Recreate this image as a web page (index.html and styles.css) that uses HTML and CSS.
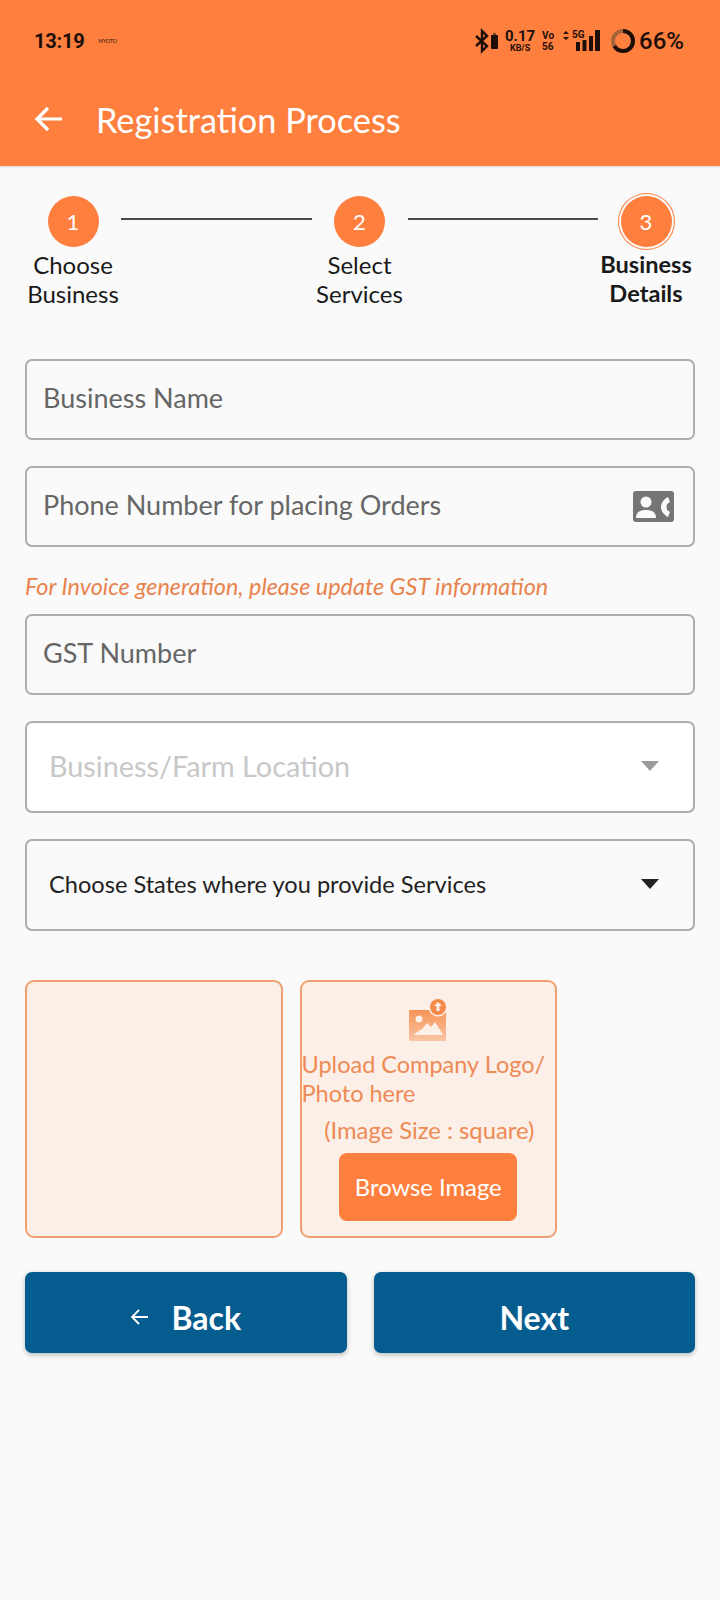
FILE: index.html
```html
<!DOCTYPE html>
<html lang="en">
<head>
  <meta charset="UTF-8">
  <title>Registration Process</title>
  <link rel="stylesheet" href="styles.css">
</head>
<body>
  <!-- Header -->
  <header class="app-header">
    <div class="status-bar">
      <span class="status-time">13:19</span>
      <span class="status-carrier">MYOTO</span>
      <div class="status-icons">
        <svg class="icon-bt" width="24" height="26" viewBox="0 0 24 26">
          <path d="M1 8l11 10-5 5V3l5 5L1 18" fill="none" stroke="#1d0f08" stroke-width="2.4"/>
          <rect x="16" y="7" width="7" height="14" rx="1" fill="#1d0f08"/>
          <rect x="18" y="5" width="3" height="2" fill="#7a4a2a"/>
        </svg>
        <div class="net-speed"><b>0.17</b><small>KB/S</small></div>
        <div class="volte"><span>Vo</span><span>56</span></div>
        <svg class="icon-signal" width="38" height="24" viewBox="0 0 38 24">
          <path d="M0 5l3-3 3 3zM0 8l3 3 3-3z" fill="#1d0f08"/>
          <text x="9" y="9" class="signal-label">5G</text>
          <rect x="13" y="13" width="4" height="9" fill="#1d0f08"/>
          <rect x="19.500" y="11" width="4" height="11" fill="#1d0f08"/>
          <rect x="26" y="7" width="4" height="15" fill="#1d0f08"/>
          <rect x="32" y="1" width="5" height="21" fill="#1d0f08"/>
        </svg>
        <svg class="icon-battery" width="26" height="26" viewBox="0 0 26 26">
          <circle cx="13" cy="13" r="10" fill="none" stroke="#a5643a" stroke-width="4"/>
          <circle cx="13" cy="13" r="10" fill="none" stroke="#1d0f08" stroke-width="4" stroke-dasharray="41.5 62.8" transform="rotate(-90 13 13)"/>
        </svg>
        <span class="status-battery">66%</span>
      </div>
    </div>
    <div class="title-bar">
      <svg class="back-arrow" width="30" height="28" viewBox="0 0 30 28">
        <path d="M28 14H4M14 3L3 14l11 11" fill="none" stroke="#fff" stroke-width="3.2"/>
      </svg>
      <h1>Registration Process</h1>
    </div>
  </header>

  <main>
    <!-- Steps -->
    <div class="stepper">
      <div class="step">
        <div class="step-circle">1</div>
        <div class="step-label">Choose<br>Business</div>
      </div>
      <div class="step-line"></div>
      <div class="step">
        <div class="step-circle">2</div>
        <div class="step-label">Select<br>Services</div>
      </div>
      <div class="step-line"></div>
      <div class="step active">
        <div class="step-circle">3</div>
        <div class="step-label">Business<br>Details</div>
      </div>
    </div>

    <!-- Form -->
    <form class="reg-form">
      <div class="field">Business Name</div>
      <div class="field">
        Phone Number for placing Orders
        <svg class="contact-icon" width="41" height="31" viewBox="0 0 41 31">
          <rect width="41" height="31" rx="3" fill="#757575"/>
          <circle cx="13" cy="11" r="5.500" fill="#fafafa"/>
          <path d="M3 27c0-6 4-8 10-8s10 2 10 8z" fill="#fafafa"/>
          <path d="M35 6l2 5-3 2c-.5 2-.5 4 0 6l3 2-2 5c-4-2-7-6-7-10s3-8 7-10z" fill="#fafafa"/>
        </svg>
      </div>
      <p class="gst-note">For Invoice generation, please update GST information</p>
      <div class="field">GST Number</div>
      <div class="field select-field location">
        <span>Business/Farm Location</span>
        <span class="caret"></span>
      </div>
      <div class="field select-field states">
        <span>Choose States where you provide Services</span>
        <span class="caret"></span>
      </div>

      <!-- Upload -->
      <div class="upload-row">
        <div class="upload-tile"></div>
        <div class="upload-tile upload-box">
          <svg class="upload-icon" width="40" height="44" viewBox="0 0 40 44">
            <defs>
              <linearGradient id="photoFade" x1="0" y1="0" x2="0" y2="1">
                <stop offset="0" stop-color="#f79458"/>
                <stop offset="1" stop-color="#fbc4a3"/>
              </linearGradient>
            </defs>
            <rect x="1" y="12" width="37" height="31" rx="1" fill="url(#photoFade)"/>
            <circle cx="11" cy="21" r="3.500" fill="#fdf0e8"/>
            <path d="M5 37l9-6 5-6 4 4 4-5 5 8 3 5z" fill="#fdf0e8"/>
            <circle cx="30" cy="9" r="9.500" fill="#fcefe7"/>
            <circle cx="30" cy="9" r="8" fill="#f58a4b"/>
            <path d="M30 4l4 4h-2.500v5h-3V8H26z" fill="#fdf0e8"/>
          </svg>
          <div class="upload-text">Upload Company Logo/<br>Photo here</div>
          <div class="upload-size">(Image Size : square)</div>
          <button type="button" class="browse-btn">Browse Image</button>
        </div>
      </div>

      <div class="form-actions">
        <button type="button" class="action-btn">
          <svg width="20" height="20" viewBox="0 0 20 20">
            <path d="M18 10H3M9 3l-7 7 7 7" fill="none" stroke="#fff" stroke-width="1.800"/>
          </svg>
          Back
        </button>
        <button type="button" class="action-btn">Next</button>
      </div>
    </form>
  </main>
</body>
</html>
```

FILE: styles.css
```css
/* General Styles */
* {
  box-sizing: border-box;
}

body {
  font-family: Lato, "Open Sans", sans-serif;
  margin: 0;
  padding: 0;
  background-color: #fafafa;
  min-height: 1600px;
}

/* Header */
.app-header {
  height: 166px;
  background-color: #ff7f3f;
  box-shadow: 0 1px 2px rgba(0, 0, 0, 0.15);
  padding: 0 36px 0 34px;
}

.status-bar {
  display: flex;
  align-items: center;
  height: 82px;
  color: #1d0f08;
}

.status-time {
  font-family: Roboto, sans-serif;
  font-size: 20px;
  font-weight: 700;
  letter-spacing: -0.2px;
}

.status-carrier {
  font-size: 5px;
  margin-left: 14px;
}

.status-icons {
  display: flex;
  align-items: center;
  margin-left: auto;
}

.net-speed {
  display: flex;
  flex-direction: column;
  align-items: center;
  width: 28px;
  margin-left: 7px;
  font-family: Roboto, sans-serif;
  line-height: 10px;
}

.net-speed b {
  font-size: 15px;
  line-height: 14px;
  font-weight: 700;
}

.net-speed small {
  font-size: 9px;
  font-weight: 700;
}

.volte {
  display: flex;
  flex-direction: column;
  margin-left: 8px;
  font-family: Roboto, sans-serif;
  font-size: 10px;
  line-height: 11px;
  font-weight: 700;
}

.icon-signal {
  margin-left: 9px;
}

.signal-label {
  font-family: Roboto, sans-serif;
  font-size: 10px;
  font-weight: 700;
  fill: #1d0f08;
}

.icon-battery {
  margin-left: 9px;
}

.status-battery {
  font-family: Roboto, sans-serif;
  font-size: 24px;
  font-weight: 500;
  margin-left: 3px;
}

.title-bar {
  display: flex;
  align-items: center;
  height: 74px;
}

.title-bar h1 {
  margin: 0 0 0 32px;
  color: #fff;
  font-size: 34.300px;
  font-weight: 400;
}

/* Steps */
.stepper {
  display: flex;
  align-items: flex-start;
  padding: 30px 26px 0 25px;
}

.step {
  display: flex;
  flex-direction: column;
  align-items: center;
  width: 96px;
}

.step-circle {
  display: flex;
  align-items: center;
  justify-content: center;
  width: 51px;
  height: 51px;
  border-radius: 50%;
  background-color: #ff7f3f;
  color: #fff;
  font-size: 22px;
}

.step.active .step-circle {
  box-shadow: 0 0 0 2px #fafafa, 0 0 0 3px #ff7f3f;
}

.step-label {
  margin-top: 3px;
  text-align: center;
  font-size: 24px;
  line-height: 29px;
  color: #1a1a1a;
}

.step.active .step-label {
  font-size: 23.600px;
  font-weight: 700;
}

.step-line {
  flex: 1;
  height: 2px;
  margin: 22px 0 0;
  background-color: #4a4a4a;
}

/* Form */
.reg-form {
  padding: 0 25px 0 25px;
  margin-top: 51px;
}

.field {
  display: flex;
  align-items: center;
  justify-content: space-between;
  height: 81px;
  margin-bottom: 26px;
  padding: 0 19px 4px 16px;
  border: 2px solid #aeaeae;
  border-radius: 7px;
  font-size: 27px;
  color: #666;
}

.contact-icon {
  margin-top: 4px;
}

.gst-note {
  margin: -5px 0 10px;
  font-size: 23.400px;
  line-height: 36px;
  font-style: italic;
  color: #e8834d;
}

.select-field {
  height: 92px;
  padding: 0 34px 2px 22px;
}

.location {
  background-color: #fff;
  color: #c8c8c8;
  font-size: 28.800px;
}

.location .caret {
  border-top-color: #9b9b9b;
}

.states {
  font-size: 23.600px;
  color: #222;
  margin-bottom: 49px;
}

.caret {
  width: 0;
  height: 0;
  border-left: 9px solid transparent;
  border-right: 9px solid transparent;
  border-top: 10px solid #222;
}

/* Upload */
.upload-row {
  display: flex;
  gap: 17px;
}

.upload-tile {
  width: 257.500px;
  height: 258px;
  background-color: #fcefe7;
  border: 2px solid #f0a070;
  border-radius: 9px;
}

.upload-box {
  display: flex;
  flex-direction: column;
  align-items: flex-start;
  padding-top: 16px;
  color: #ee8a55;
  font-size: 23.500px;
  line-height: 29px;
}

.upload-icon {
  align-self: center;
  margin-bottom: 8px;
}

.upload-text {
  white-space: nowrap;
}

.upload-size {
  align-self: center;
  margin: 8px 0 8px 2px;
  font-size: 23.800px;
}

.browse-btn {
  align-self: center;
  width: 178px;
  height: 68px;
  border: none;
  border-radius: 8px;
  background-color: #ff7f3f;
  color: #fff;
  font-family: inherit;
  font-size: 23.800px;
}

/* Buttons */
.form-actions {
  display: flex;
  gap: 27px;
  margin-top: 34px;
}

.action-btn {
  display: flex;
  align-items: center;
  justify-content: center;
  gap: 21px;
  flex: 1;
  height: 81px;
  padding: 9px 0 0;
  border: none;
  border-radius: 7px;
  background-color: #045c8f;
  box-shadow: 0 2px 5px rgba(0, 0, 0, 0.25);
  color: #fff;
  font-family: inherit;
  font-size: 32px;
  font-weight: 700;
}
```
